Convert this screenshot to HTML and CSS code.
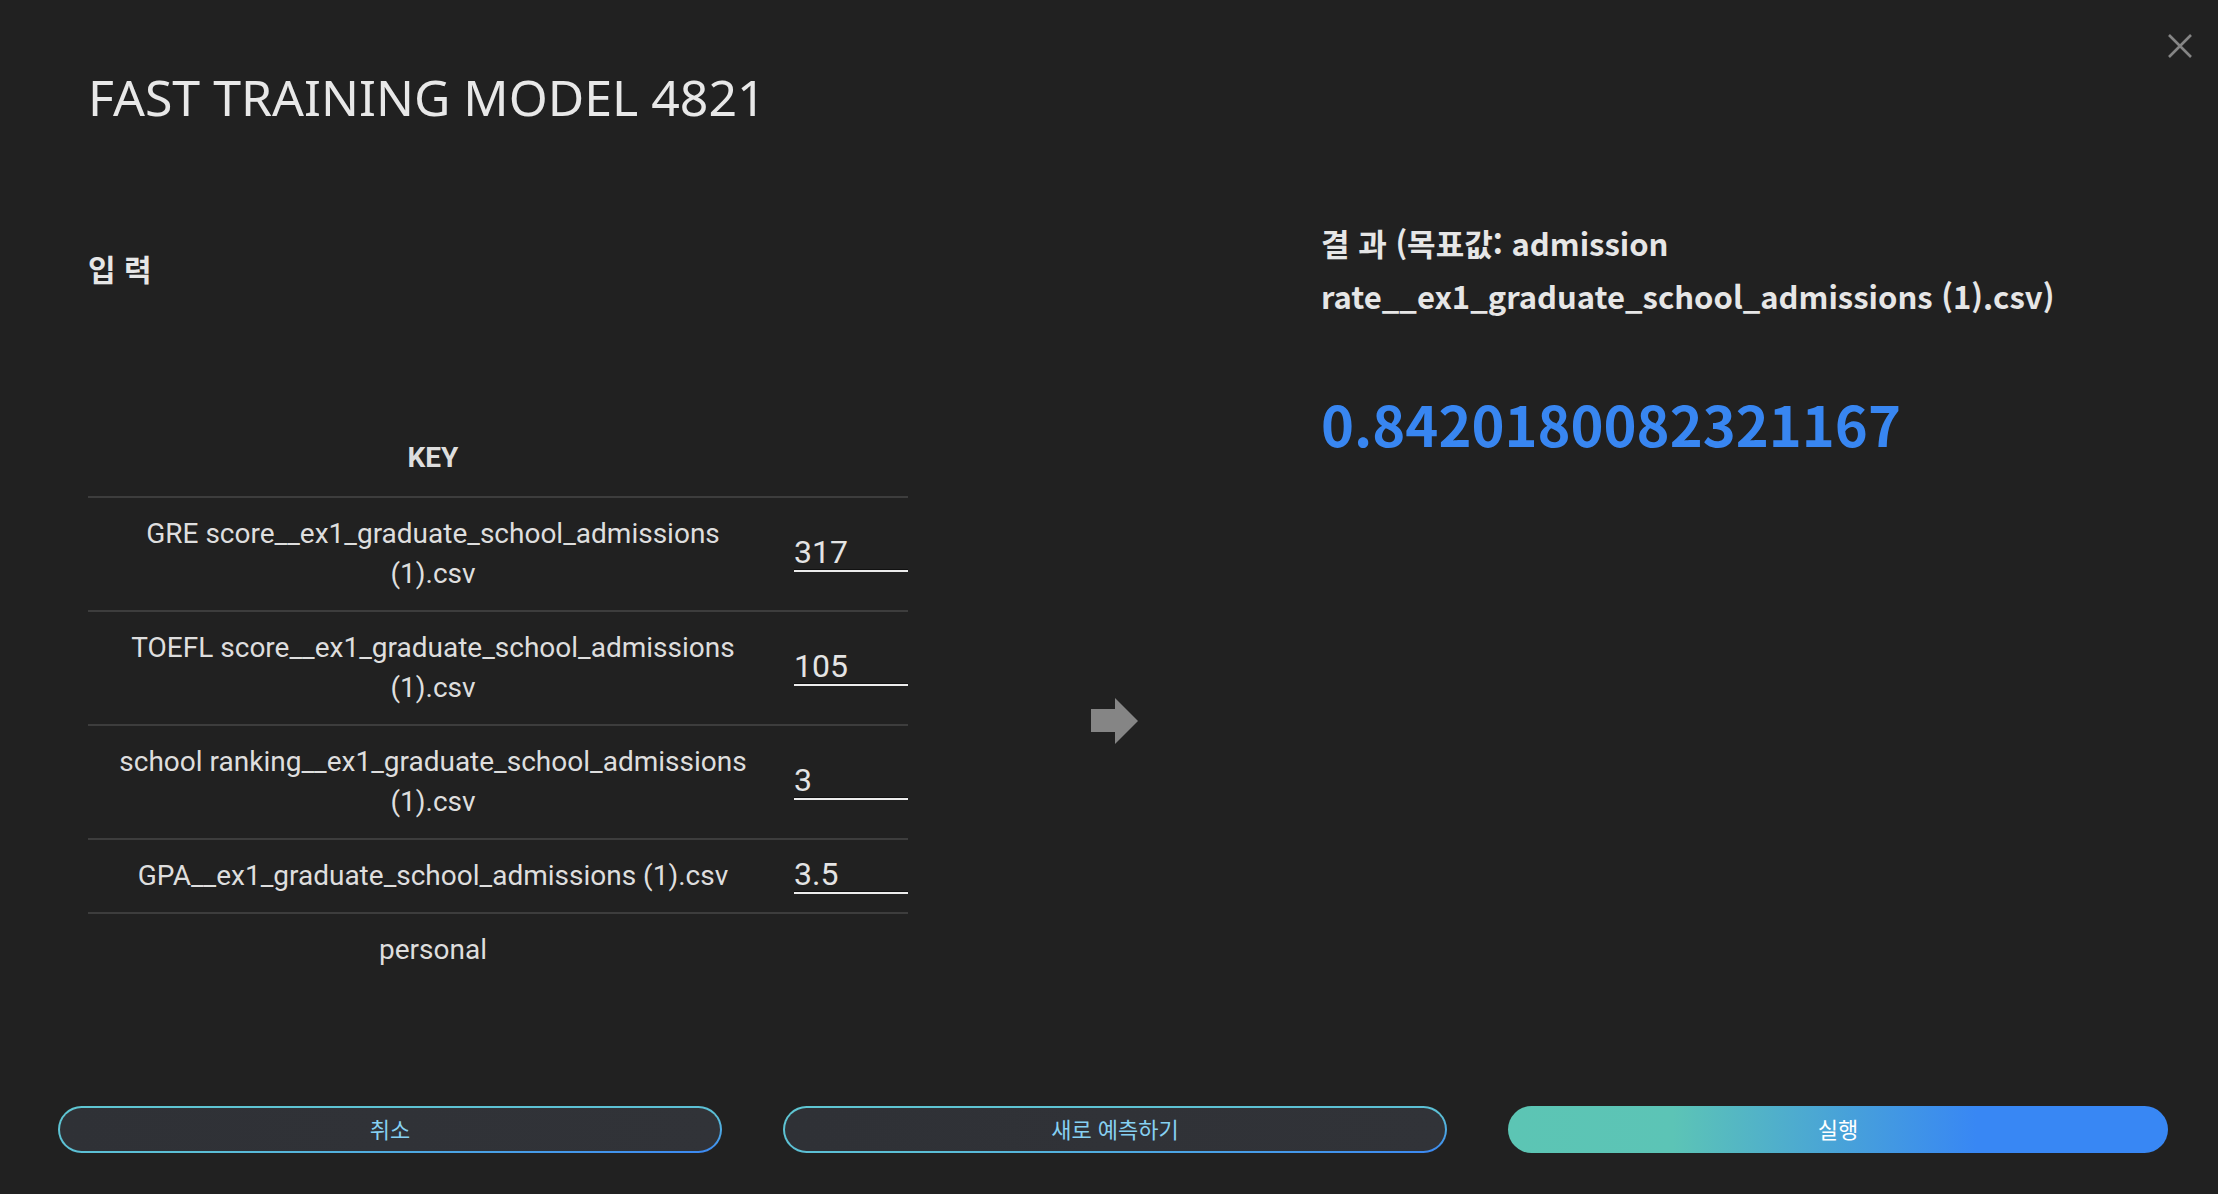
FILE: index.html
```html
<!DOCTYPE html>
<html lang="ko">
<head>
<meta charset="utf-8">
<title>FAST TRAINING MODEL 4821</title>
<link rel="stylesheet" href="styles.css">
</head>
<body>
<div class="modal">
  <button class="close" aria-label="close">
    <svg width="24" height="24" viewBox="0 0 24 24"><path d="M1 1 L23 23 M23 1 L1 23" stroke="#858585" stroke-width="2.6" fill="none"/></svg>
  </button>
  <h1 class="title">FAST TRAINING MODEL 4821</h1>
  <div class="main">
    <section class="input-col">
      <h2 class="section-title">입 력</h2>
      <table class="key-table">
        <thead>
          <tr><th class="key-head">KEY</th><th class="val-head"></th></tr>
        </thead>
        <tbody>
          <tr><td class="key">GRE score__ex1_graduate_school_admissions (1).csv</td><td class="val"><input class="field" value="317"></td></tr>
          <tr><td class="key">TOEFL score__ex1_graduate_school_admissions (1).csv</td><td class="val"><input class="field" value="105"></td></tr>
          <tr><td class="key">school ranking__ex1_graduate_school_admissions (1).csv</td><td class="val"><input class="field" value="3"></td></tr>
          <tr><td class="key">GPA__ex1_graduate_school_admissions (1).csv</td><td class="val"><input class="field" value="3.5"></td></tr>
          <tr class="last"><td class="key">personal</td><td class="val"></td></tr>
        </tbody>
      </table>
    </section>
    <div class="arrow-col">
      <svg class="arrow" width="48" height="46" viewBox="0 0 48 46"><path d="M0 11 H24 V0 L47 23 L24 46 V34 H0 Z" fill="#858585"/></svg>
    </div>
    <section class="result-col">
      <h2 class="result-title">결 과 (목표값: admission rate__ex1_graduate_school_admissions (1).csv)</h2>
      <div class="result-value">0.8420180082321167</div>
    </section>
  </div>
  <div class="actions">
    <button class="btn btn-outline">취소</button>
    <button class="btn btn-outline">새로 예측하기</button>
    <button class="btn btn-primary">실행</button>
  </div>
</div>
</body>
</html>
```

FILE: styles.css
```css
* { box-sizing: border-box; }
html, body { margin: 0; padding: 0; }
body {
  background: #212121;
  width: 2218px;
  height: 1194px;
  overflow: hidden;
  font-family: "Noto Sans", "Noto Sans CJK KR", sans-serif;
  color: #e6e6e6;
}
.modal {
  position: relative;
  height: 1194px;
  display: flex;
  flex-direction: column;
}
.close {
  position: absolute;
  top: 34px;
  left: 2168px;
  width: 24px;
  height: 24px;
  padding: 0;
  border: 0;
  background: transparent;
  display: block;
}
.close svg { display: block; }
.title {
  margin: 63px 0 0 88px;
  font-family: "Noto Sans", sans-serif;
  font-weight: 400;
  font-size: 50px;
  line-height: 68px;
  color: #e8e8e8;
  letter-spacing: 0;
}
.main {
  display: grid;
  grid-template-columns: 820px 413px 1fr;
  padding-left: 88px;
}
.section-title {
  margin: 117px 0 0 0;
  font-family: "Noto Sans CJK KR", sans-serif;
  font-weight: 700;
  font-size: 30px;
  line-height: 40px;
  color: #e6e6e6;
}
.key-table {
  margin-top: 134px;
  width: 820px;
  border-collapse: collapse;
  font-family: Roboto, sans-serif;
  font-size: 28px;
  line-height: 40px;
  color: #dedede;
}
.key-table th, .key-table td {
  padding: 16px;
  border-bottom: 2px solid #3d3d3d;
  text-align: center;
  vertical-align: middle;
}
.key-table .key-head {
  font-weight: 700;
  width: 690px;
  padding-bottom: 18px;
}
.key-table .val-head { width: 130px; }
.key-table td.key { width: 690px; }
.key-table td.val { padding: 0 0 0 16px; text-align: left; }
.key-table tr.last td { border-bottom: 0; }
.field {
  display: block;
  width: 114px;
  margin: 0;
  padding: 0 0 2px 0;
  border: 0;
  border-bottom: 2px solid #ececec;
  box-shadow: inset 0 -1px 0 #111;
  background: transparent;
  font-family: Roboto, sans-serif;
  font-size: 32px;
  line-height: 32px;
  height: 36px;
  color: #e4e4e4;
  outline: none;
}
.arrow-col {
  display: flex;
  justify-content: center;
  padding-top: 567px;
}
.arrow { display: block; }
.result-col { padding-left: 0; }
.result-title {
  margin: 85px 0 0 0;
  width: 760px;
  font-family: "Noto Sans CJK KR", sans-serif;
  font-weight: 700;
  font-size: 31px;
  line-height: 53px;
  color: #e6e6e6;
}
.result-value {
  margin-top: 66px;
  font-family: "Noto Sans CJK KR", sans-serif;
  font-weight: 700;
  font-size: 56px;
  line-height: 70px;
  color: #3886f1;
}
.actions {
  margin-top: auto;
  margin-bottom: 41px;
  display: flex;
  gap: 61px;
  padding: 0 50px 0 58px;
}
.btn {
  flex: 1 1 0;
  height: 47px;
  border-radius: 24px;
  font-family: "Noto Sans CJK KR", sans-serif;
  font-size: 22px;
  line-height: 1;
  padding: 0 0 4px 0;
  cursor: pointer;
}
.btn-outline {
  border: 2px solid transparent;
  background:
    linear-gradient(90deg, #2f3136, #313338) padding-box,
    linear-gradient(to bottom right, #5fc6d2 0%, #5bbfd6 60%, #3a86f3 100%) border-box;
  color: #86d0f2;
}
.btn-primary {
  border: 0;
  background: linear-gradient(90deg, #5cc5b4 0%, #5cc4b6 25%, #3887f4 71%, #3887f4 100%);
  color: #ffffff;
}
```
